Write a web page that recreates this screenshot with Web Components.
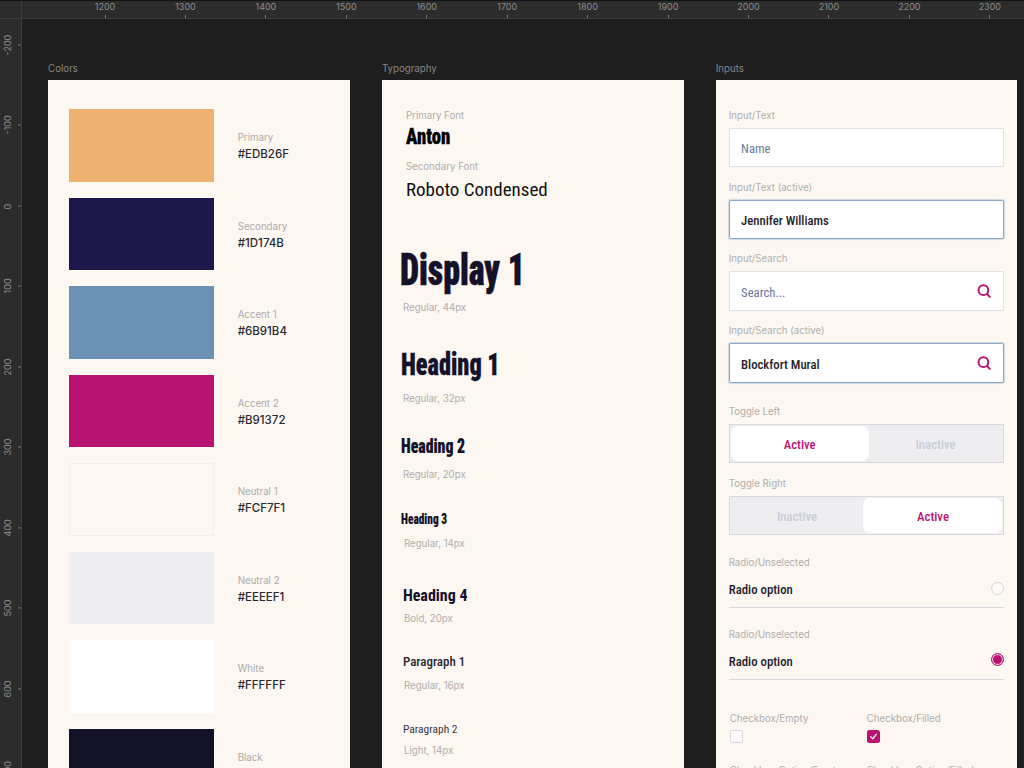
<!DOCTYPE html>
<html>
<head>
<meta charset="utf-8">
<style>
  html, body { margin: 0; height: 768px; overflow: hidden; background: #1e1e1e; }
  body { font-family: "Inter", "Liberation Sans", sans-serif; }
</style>
</head>
<body>
<style-board>
  <ds-panel slot="panels" heading="Colors">
    <color-group>
      <color-swatch name="Primary" hex="#EDB26F"></color-swatch>
      <color-swatch name="Secondary" hex="#1D174B"></color-swatch>
      <color-swatch name="Accent 1" hex="#6B91B4"></color-swatch>
      <color-swatch name="Accent 2" hex="#B91372"></color-swatch>
      <color-swatch name="Neutral 1" hex="#FCF7F1" outlined></color-swatch>
      <color-swatch name="Neutral 2" hex="#EEEEF1"></color-swatch>
      <color-swatch name="White" hex="#FFFFFF"></color-swatch>
      <color-swatch name="Black" hex="#14112A"></color-swatch>
    </color-group>
  </ds-panel>
  <ds-panel slot="panels" heading="Typography">
    <type-group></type-group>
  </ds-panel>
  <ds-panel slot="panels" heading="Inputs">
    <input-group></input-group>
  </ds-panel>
</style-board>

<script>
const CONDENSED = `"Roboto Condensed", Roboto, "Liberation Sans Narrow", sans-serif`;

class StyleBoard extends HTMLElement {
    constructor() {
        super();
        this.shadowDOM = this.attachShadow({ mode: "open" });
    }

    connectedCallback() {
        const top = [1200, 1300, 1400, 1500, 1600, 1700, 1800, 1900, 2000, 2100, 2200, 2300]
            .map(n => `<span>${n}</span>`).join("");
        const left = [-200, -100, 0, 100, 200, 300, 400, 500, 600, 700]
            .map(n => `<span>${n}</span>`).join("");
        this.shadowDOM.innerHTML = `
            <style>
                :host {
                    display: grid;
                    grid-template-columns: 22px 1fr;
                    grid-template-rows: 19px 1fr;
                    width: 1024px;
                    height: 768px;
                    overflow: hidden;
                    background: #1e1e1e;
                    color: #8d8d8d;
                    font: 9px "Inter", "Liberation Sans", sans-serif;
                }
                .corner { background: #2c2c2c; border-top: 1px solid #111; border-bottom: 1px solid #3d3d3d; border-right: 1px solid #3d3d3d; }
                .top {
                    display: flex;
                    background: #2c2c2c;
                    border-top: 1px solid #111;
                    border-bottom: 1px solid #3d3d3d;
                    padding-left: 42.8px;
                    overflow: hidden;
                }
                .top span {
                    flex: 0 0 80.45px;
                    text-align: center;
                    line-height: 12px;
                    background: linear-gradient(#777, #777) center bottom / 1px 3px no-repeat;
                }
                .left {
                    display: flex;
                    flex-direction: column;
                    background: #2c2c2c;
                    border-right: 1px solid #3d3d3d;
                    overflow: hidden;
                }
                .left span {
                    flex: 0 0 80.45px;
                    writing-mode: vertical-rl;
                    transform: rotate(180deg);
                    text-align: center;
                    width: 100%;
                    line-height: 16px;
                    background: linear-gradient(#777, #777) center left / 3px 1px no-repeat;
                }
                .left span:first-child { margin-top: -14px; }
                .canvas {
                    display: grid;
                    grid-template-columns: repeat(3, 301.8px);
                    column-gap: 32px;
                    align-items: start;
                    padding: 42px 0 0 26.1px;
                    overflow: hidden;
                }
            </style>
            <div class="corner"></div>
            <div class="top">${top}</div>
            <div class="left">${left}</div>
            <div class="canvas"><slot name="panels"></slot></div>`;
    }
}

class DsPanel extends HTMLElement {
    constructor() {
        super();
        this.shadowDOM = this.attachShadow({ mode: "open" });
    }

    connectedCallback() {
        this.shadowDOM.innerHTML = `
            <style>
                :host { display: block; }
                .heading {
                    height: 19px;
                    font: 9.7px/15px "Inter", "Liberation Sans", sans-serif;
                    color: #868686;
                }
                .sheet { background: #fcf7f1; height: 900px; }
            </style>
            <div class="heading">${this.getAttribute("heading")}</div>
            <div class="sheet"><slot></slot></div>`;
    }
}

class ColorGroup extends HTMLElement {
    constructor() {
        super();
        this.attachShadow({ mode: "open" }).innerHTML = `
            <style>
                :host { display: flex; flex-direction: column; gap: 16px; padding: 29px 0 0 20.6px; }
            </style>
            <slot></slot>`;
    }
}

class ColorSwatch extends HTMLElement {
    constructor() {
        super();
        this.shadowDOM = this.attachShadow({ mode: "open" });
    }

    connectedCallback() {
        const hex = this.getAttribute("hex");
        const border = this.hasAttribute("outlined") ? "1px solid #f4efe8" : "none";
        this.shadowDOM.innerHTML = `
            <style>
                :host { display: flex; align-items: center; gap: 24px; height: 72.5px; }
                .chip { box-sizing: border-box; width: 145px; height: 100%; background: ${hex}; border: ${border}; }
                .text { padding-top: 1.6px; }
                .name { font: 9.7px/16px "Inter", "Liberation Sans", sans-serif; color: #aeaaa9; }
                .hex { font: 500 11.5px/16px "Inter", "Liberation Sans", sans-serif; color: #2a2833; }
            </style>
            <div class="chip"></div>
            <div class="text">
                <div class="name">${this.getAttribute("name")}</div>
                <div class="hex">${hex}</div>
            </div>`;
    }
}

// One specimen: a line of sample text and the grey note under it
class TypeSpec extends HTMLElement {
    constructor() {
        super();
        this.shadowDOM = this.attachShadow({ mode: "open" });
    }

    connectedCallback() {
        const a = n => this.getAttribute(n);
        this.shadowDOM.innerHTML = `
            <style>
                :host { display: block; margin-top: ${a("top") || 0}px; padding-left: ${a("indent") || 0}px; }
                .sample {
                    display: block;
                    width: max-content;
                    height: ${a("lh")}px;
                    line-height: ${+a("lh") + (+a("nudge") || 0)}px;
                    font-family: ${a("anton") !== null ? `Roboto, "Liberation Sans", sans-serif` : CONDENSED};
                    font-size: ${a("size")}px;
                    font-weight: ${a("weight") || 400};
                    font-stretch: 75%;
                    color: ${a("color") || "#14112a"};
                    transform: scaleX(${a("sx") || 1});
                    transform-origin: left center;
                    -webkit-text-stroke: ${a("stroke") || 0}px currentColor;
                }
                .note {
                    height: 14px;
                    margin: ${a("gap") || 0}px 0 0 ${a("note") || 0}px;
                    font: 9.7px/16px "Inter", "Liberation Sans", sans-serif;
                    color: #b0aeac;
                }
            </style>
            <div class="sample">${a("text")}</div>
            <div class="note">${a("sub") || ""}</div>`;
    }
}

class TypeGroup extends HTMLElement {
    constructor() {
        super();
        this.attachShadow({ mode: "open" }).innerHTML = `
            <style>
                :host { display: block; padding: 28px 0 0 18px; }
                .label { height: 14px; margin-left: 6px; font: 9.7px/16px "Inter", "Liberation Sans", sans-serif; color: #b0aeac; }
                .anton { height: 26px; margin: 2px 0 0 6px; width: max-content; font: 900 22px/26px Roboto, sans-serif; font-stretch: 75%; color: #000; transform: scaleX(.85); transform-origin: left center; -webkit-text-stroke: .3px #000; }
                .roboto { height: 26px; margin: 3px 0 0 6px; font: 400 19px/28px ${CONDENSED}; font-stretch: 75%; color: #111; }
            </style>
            <div class="label">Primary Font</div>
            <div class="anton">Anton</div>
            <div class="label" style="margin-top:9px">Secondary Font</div>
            <div class="roboto">Roboto Condensed</div>
            <type-spec top="46" text="Display 1" anton weight="900" size="44" lh="44" sx=".77" stroke=".6" gap="8" note="3" sub="Regular, 44px"></type-spec>
            <type-spec top="33" indent="1" text="Heading 1" anton weight="900" size="32" lh="34" sx=".76" stroke=".3" gap="10" note="2" sub="Regular, 32px"></type-spec>
            <type-spec top="29" indent="1" text="Heading 2" anton weight="900" size="20" lh="24" sx=".79" stroke=".2" gap="9" note="2" sub="Regular, 20px"></type-spec>
            <type-spec top="29" indent="1" text="Heading 3" anton weight="900" size="14" lh="18" sx=".81" stroke=".1" gap="8" note="3" sub="Regular, 14px"></type-spec>
            <type-spec top="34" indent="3" nudge="2" text="Heading 4" weight="700" size="16" lh="22" gap="5" note="1" sub="Bold, 20px"></type-spec>
            <type-spec top="26" indent="3" nudge="2" text="Paragraph 1" weight="500" color="#2a2833" size="13" lh="20" gap="7" note="1" sub="Regular, 16px"></type-spec>
            <type-spec top="28" indent="3" text="Paragraph 2" weight="400" color="#3a3845" size="11.5" lh="18" gap="5" note="1" sub="Light, 14px"></type-spec>`;
    }
}

class DsField extends HTMLElement {
    constructor() {
        super();
        this.shadowDOM = this.attachShadow({ mode: "open" });
    }

    connectedCallback() {
        this.shadowDOM.innerHTML = `
            <style>
                :host { display: block; }
                .label {
                    height: 14px;
                    padding: ${this.getAttribute("above") || 12.2}px 0 ${this.getAttribute("below") || 6}px;
                    font: 9.7px/16px "Inter", "Liberation Sans", sans-serif;
                    color: #b0aeac;
                    white-space: nowrap;
                }
            </style>
            <div class="label">${this.getAttribute("label")}</div>
            <slot></slot>`;
    }
}

class TextInput extends HTMLElement {
    constructor() {
        super();
        this.shadowDOM = this.attachShadow({ mode: "open" });
    }

    connectedCallback() {
        const active = this.hasAttribute("active");
        const icon = this.hasAttribute("search") ? `
            <svg width="14" height="14" viewBox="0 0 14 14" fill="none" stroke="#b91372" stroke-width="2" stroke-linecap="round">
                <circle cx="6.4" cy="6.2" r="4.9"/><path d="M10.2 10.1 12.7 12.7"/>
            </svg>` : "";
        this.shadowDOM.innerHTML = `
            <style>
                :host {
                    display: flex;
                    align-items: center;
                    justify-content: space-between;
                    box-sizing: border-box;
                    height: 39.5px;
                    padding: 0 12px 0 11.4px;
                    background: #fff;
                    border: 1px solid ${active ? "#8aa8c3" : "#e3e1e0"};
                    border-radius: ${active ? 2 : 1}px;
                    box-shadow: ${active ? "0 0 1px 1px rgba(107,145,180,.3)" : "none"};
                    font: ${active ? 500 : 400} 12.7px/20px ${CONDENSED};
                    font-stretch: 75%;
                    color: ${active ? "#1f1d2b" : "#6a7a9c"};
                }
                span { padding-top: 3.5px; }
            </style>
            <span><slot></slot></span>${icon}`;
    }
}

class DsToggle extends HTMLElement {
    constructor() {
        super();
        this.shadowDOM = this.attachShadow({ mode: "open" });
    }

    connectedCallback() {
        const right = this.getAttribute("on") === "right";
        this.shadowDOM.innerHTML = `
            <style>
                :host {
                    display: grid;
                    grid-template-columns: ${right ? "1fr 139px" : "138px 1fr"};
                    box-sizing: border-box;
                    height: 39.5px;
                    padding: 1px;
                    background: #eeeef1;
                    border: 1px solid #d8d8de;
                    font: 500 12.8px/20px ${CONDENSED};
                    font-stretch: 75%;
                    text-align: center;
                }
                div { display: flex; align-items: center; justify-content: center; padding-top: 3px; box-sizing: border-box; color: #c9ccd9; }
                .on { background: #fff; border-radius: 7px; color: #b91372; }
            </style>
            <div class="${right ? "" : "on"}">${right ? "Inactive" : "Active"}</div>
            <div class="${right ? "on" : ""}">${right ? "Active" : "Inactive"}</div>`;
    }
}

class RadioRow extends HTMLElement {
    constructor() {
        super();
        this.shadowDOM = this.attachShadow({ mode: "open" });
    }

    connectedCallback() {
        const on = this.hasAttribute("checked");
        this.shadowDOM.innerHTML = `
            <style>
                :host {
                    display: flex;
                    justify-content: space-between;
                    box-sizing: border-box;
                    height: 38px;
                    border-bottom: 1px solid #d9d8dc;
                    font: 500 12.8px/${on ? 39 : 40}px ${CONDENSED};
                    font-stretch: 75%;
                    color: #1f1d2b;
                }
                i {
                    box-sizing: border-box;
                    width: 13px;
                    height: 13px;
                    margin-top: ${on ? 11 : 12}px;
                    border-radius: 50%;
                    border: 1px solid ${on ? "#b91372" : "#d6d4d6"};
                    background: ${on ? "#b91372" : "#fdfbf8"};
                    box-shadow: ${on ? "inset 0 0 0 1px #f3d5e5" : "none"};
                }
            </style>
            <span><slot></slot></span><i></i>`;
    }
}

class CheckBox extends HTMLElement {
    constructor() {
        super();
        this.shadowDOM = this.attachShadow({ mode: "open" });
    }

    connectedCallback() {
        const on = this.hasAttribute("checked");
        const mark = on ? `<svg width="13" height="13" viewBox="0 0 13 13" fill="none" stroke="#fff" stroke-width="1.3" stroke-linecap="round" stroke-linejoin="round"><path d="M3.8 6.8 5.7 8.8 9.3 4.3"/></svg>` : "";
        this.shadowDOM.innerHTML = `
            <style>
                :host {
                    display: block;
                    box-sizing: border-box;
                    width: 13px;
                    height: 13px;
                    border-radius: 2.5px;
                    border: ${on ? "0" : "1px solid #d6d5da"};
                    background: ${on ? "#b91372" : "#fdfcfb"};
                }
                svg { display: block; }
            </style>${mark}`;
    }
}

class InputGroup extends HTMLElement {
    constructor() {
        super();
        this.attachShadow({ mode: "open" }).innerHTML = `
            <style>
                :host { display: block; padding: 15.8px 13px 0; }
                .checks { display: grid; grid-template-columns: 137px 1fr; padding-left: 1px; }
            </style>
            <ds-field label="Input/Text"><text-input>Name</text-input></ds-field>
            <ds-field label="Input/Text (active)"><text-input active>Jennifer Williams</text-input></ds-field>
            <ds-field label="Input/Search"><text-input search>Search...</text-input></ds-field>
            <ds-field label="Input/Search (active)"><text-input search active>Blockfort Mural</text-input></ds-field>
            <ds-field above="21.4" label="Toggle Left"><ds-toggle on="left"></ds-toggle></ds-field>
            <ds-field above="12.5" label="Toggle Right"><ds-toggle on="right"></ds-toggle></ds-field>
            <ds-field above="19.5" below="1" label="Radio/Unselected"><radio-row>Radio option</radio-row></ds-field>
            <ds-field above="19" below="1" label="Radio/Unselected"><radio-row checked>Radio option</radio-row></ds-field>
            <div class="checks">
                <ds-field above="31" below="5" label="Checkbox/Empty"><check-box></check-box></ds-field>
                <ds-field above="31" below="5" label="Checkbox/Filled"><check-box checked></check-box></ds-field>
                <ds-field above="20" label="Checkbox Option/Empty"></ds-field>
                <ds-field above="20" label="Checkbox Option/Filled"></ds-field>
            </div>`;
    }
}

customElements.define("style-board", StyleBoard);
customElements.define("ds-panel", DsPanel);
customElements.define("color-group", ColorGroup);
customElements.define("color-swatch", ColorSwatch);
customElements.define("type-spec", TypeSpec);
customElements.define("type-group", TypeGroup);
customElements.define("ds-field", DsField);
customElements.define("text-input", TextInput);
customElements.define("ds-toggle", DsToggle);
customElements.define("radio-row", RadioRow);
customElements.define("check-box", CheckBox);
customElements.define("input-group", InputGroup);
</script>
</body>
</html>
